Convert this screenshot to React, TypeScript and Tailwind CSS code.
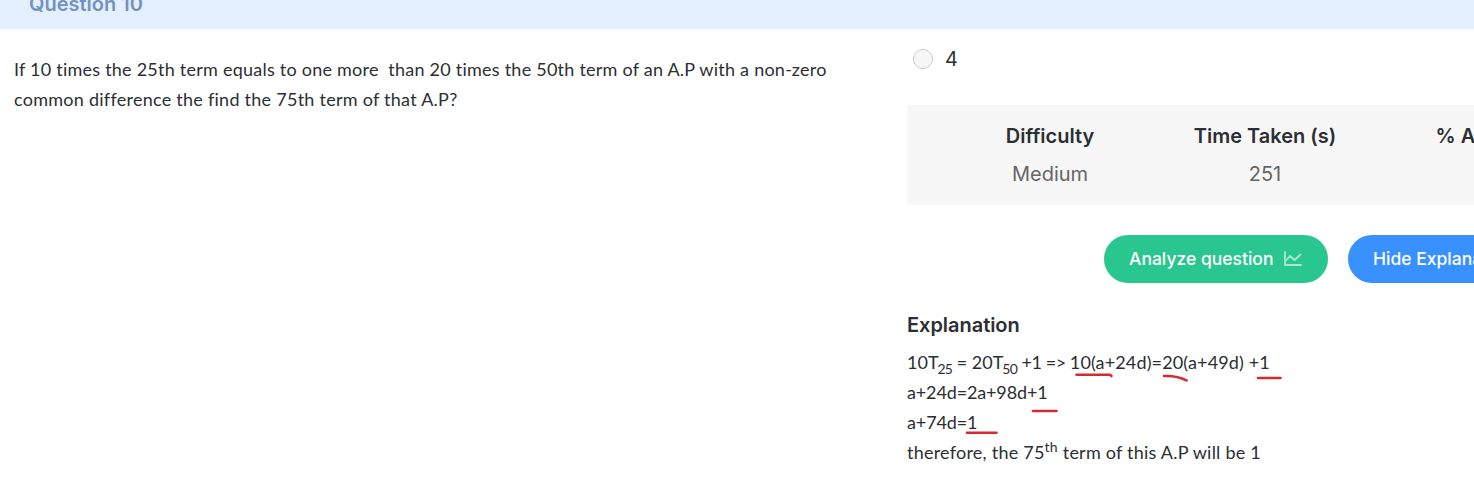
import React from "react";

const stats = [
  { label: "Difficulty", value: "Medium" },
  { label: "Time Taken (s)", value: "251" },
];

function ChartIcon() {
  return (
    <svg width="18" height="16" viewBox="0 0 18 16" fill="none" stroke="#a9e8cf" strokeWidth="1.8" strokeLinecap="round" strokeLinejoin="round">
      <path d="M1 1v13h16" />
      <path d="M2 9.500l4-4.500 4.500 4L16.500 3.500" />
    </svg>
  );
}

function Marks() {
  return (
    <svg className="pointer-events-none absolute top-px left-0" width="400" height="120" viewBox="0 0 400 120" fill="none" stroke="#d42a30" strokeWidth="2.6" strokeLinecap="round">
      <path d="M169.500 26.700H203L204.500 28" />
      <path d="M257 28C265 27.600 272 28.500 279.500 32.300" />
      <path d="M351 30H373.500" />
      <path d="M126 63H149.500" />
      <path d="M60 84.800H89.500" />
    </svg>
  );
}

export default function App() {
  return (
    <div className="h-[482px] w-[1474px] overflow-hidden bg-white font-['Inter',sans-serif] text-[#2b2f33]">
      <header className="flex h-[29px] items-start overflow-hidden bg-[#e4f0ff] pl-[29px]">
        <h1 className="-mt-[11px] text-[20px] leading-[30px] font-semibold text-[#7392bf]">Question 10</h1>
      </header>
      <main className="flex">
        <section className="w-[907px] shrink-0 pt-[25px] pl-[14px] font-['Lato',sans-serif] text-[18px] leading-[30px] whitespace-pre">
          <p className="tracking-[0.235px]">If 10 times the 25th term equals to one more  than 20 times the 50th term of an A.P with a non-zero</p>
          <p className="tracking-[0.26px]">common difference the find the 75th term of that A.P?</p>
        </section>
        <section className="w-[740px] shrink-0 pt-[15px]">
          <label className="flex h-[30px] items-center gap-[12px] pl-[6px] text-[20px]">
            <span className="h-5 w-5 rounded-full border border-[#cccccc] bg-[#f7f7f7]" />
            <span>4</span>
          </label>
          <div className="mt-[31px] flex h-[100px] bg-[#f7f7f7] pt-[12px] pl-[35.5px] text-center text-[20px] leading-[38px]">
            {stats.map((s) => (
              <div key={s.label} className="w-[215px]">
                <div className="font-semibold">{s.label}</div>
                <div className="text-[#666666]">{s.value}</div>
              </div>
            ))}
            <div className="pl-[63px] font-semibold whitespace-nowrap">% A</div>
          </div>
          <div className="mt-[30px] flex gap-5 pl-[197px] text-[17.5px] font-medium text-white">
            <button className="flex h-12 w-[224px] items-center gap-[11px] rounded-full bg-[#29c68f] pl-[25px]">
              <span className="mt-px whitespace-nowrap">Analyze question</span>
              <ChartIcon />
            </button>
            <button className="h-12 w-[224px] rounded-full bg-[#3991ff] pt-px pl-[25px] text-left whitespace-nowrap">Hide Explanation</button>
          </div>
          <h2 className="mt-[27px] text-[20px] leading-[30px] font-semibold tracking-[-0.04px]">Explanation</h2>
          <div className="relative mt-[7px] font-['Lato',sans-serif] text-[18px] leading-[30px] whitespace-nowrap">
            <p className="h-[30px]">
              10T<sub className="-bottom-[5px] -ml-px text-[14px] tracking-[-0.8px]">25</sub> = 20T<sub className="-bottom-[5px] -ml-px text-[14px] tracking-[-0.8px]">50</sub>{" "}
              <span className="tracking-[-0.45px]">+1 =&gt; </span>
              <span className="tracking-[0.14px]">10(a+24d)=20(a+49d) +1</span>
            </p>
            <p className="h-[30px] tracking-[-0.14px]">a+24d=2a+98d+1</p>
            <p className="h-[30px] tracking-[-0.12px]">a+74d=1</p>
            <p className="h-[30px] tracking-[0.23px]">
              therefore, the 75<sup className="text-[14px]">th</sup> term of this A.P will be 1
            </p>
            <Marks />
          </div>
        </section>
      </main>
    </div>
  );
}
